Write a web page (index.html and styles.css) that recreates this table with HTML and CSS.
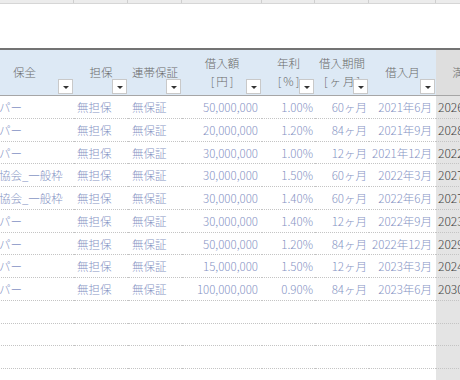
FILE: index.html
```html
<!DOCTYPE html>
<html lang="ja">
<head>
<meta charset="utf-8">
<link rel="stylesheet" href="styles.css">
</head>
<body>
<div class="sheet">
  <div class="grid strip">
    <div></div><div></div><div></div><div></div><div></div><div></div><div></div><div></div>
  </div>
  <div class="gap"></div>
  <div class="grid table">
    <div class="hd"><span>保全</span><i class="dd"></i></div>
    <div class="hd"><span>担保</span><i class="dd"></i></div>
    <div class="hd"><span>連帯保証</span><i class="dd"></i></div>
    <div class="hd"><span>借入額<br><b class="unit">[円]</b></span><i class="dd"></i></div>
    <div class="hd"><span>年利<br><b class="unit">[%]</b></span><i class="dd"></i></div>
    <div class="hd"><span>借入期間<br><b class="unit">[ヶ月]</b></span><i class="dd"></i></div>
    <div class="hd"><span>借入月</span><i class="dd"></i></div>
    <div class="hd hg"><span>満期月</span></div>

    <div class="c c1">プロパー</div><div class="c c2">無担保</div><div class="c c3">無保証</div><div class="c c4">50,000,000</div><div class="c c5">1.00%</div><div class="c c6">60ヶ月</div><div class="c c7">2021年6月</div><div class="c c8">2026年6月</div>
    <div class="c c1">プロパー</div><div class="c c2">無担保</div><div class="c c3">無保証</div><div class="c c4">20,000,000</div><div class="c c5">1.20%</div><div class="c c6">84ヶ月</div><div class="c c7">2021年9月</div><div class="c c8">2028年9月</div>
    <div class="c c1">プロパー</div><div class="c c2">無担保</div><div class="c c3">無保証</div><div class="c c4">30,000,000</div><div class="c c5">1.00%</div><div class="c c6">12ヶ月</div><div class="c c7">2021年12月</div><div class="c c8">2022年12月</div>
    <div class="c c1">保証協会_一般枠</div><div class="c c2">無担保</div><div class="c c3">無保証</div><div class="c c4">30,000,000</div><div class="c c5">1.50%</div><div class="c c6">60ヶ月</div><div class="c c7">2022年3月</div><div class="c c8">2027年3月</div>
    <div class="c c1">保証協会_一般枠</div><div class="c c2">無担保</div><div class="c c3">無保証</div><div class="c c4">30,000,000</div><div class="c c5">1.40%</div><div class="c c6">60ヶ月</div><div class="c c7">2022年6月</div><div class="c c8">2027年6月</div>
    <div class="c c1">プロパー</div><div class="c c2">無担保</div><div class="c c3">無保証</div><div class="c c4">30,000,000</div><div class="c c5">1.40%</div><div class="c c6">12ヶ月</div><div class="c c7">2022年9月</div><div class="c c8">2023年9月</div>
    <div class="c c1">プロパー</div><div class="c c2">無担保</div><div class="c c3">無保証</div><div class="c c4">50,000,000</div><div class="c c5">1.20%</div><div class="c c6">84ヶ月</div><div class="c c7">2022年12月</div><div class="c c8">2029年12月</div>
    <div class="c c1">プロパー</div><div class="c c2">無担保</div><div class="c c3">無保証</div><div class="c c4">15,000,000</div><div class="c c5">1.50%</div><div class="c c6">12ヶ月</div><div class="c c7">2023年3月</div><div class="c c8">2024年3月</div>
    <div class="c c1">プロパー</div><div class="c c2">無担保</div><div class="c c3">無保証</div><div class="c c4">100,000,000</div><div class="c c5">0.90%</div><div class="c c6">84ヶ月</div><div class="c c7">2023年6月</div><div class="c c8">2030年6月</div>

    <div class="c"></div><div class="c"></div><div class="c"></div><div class="c"></div><div class="c"></div><div class="c"></div><div class="c"></div><div class="c c8"></div>
    <div class="c"></div><div class="c"></div><div class="c"></div><div class="c"></div><div class="c"></div><div class="c"></div><div class="c"></div><div class="c c8"></div>
    <div class="c"></div><div class="c"></div><div class="c"></div><div class="c"></div><div class="c"></div><div class="c"></div><div class="c"></div><div class="c c8"></div>
    <div class="c"></div><div class="c"></div><div class="c"></div><div class="c"></div><div class="c"></div><div class="c"></div><div class="c"></div><div class="c c8"></div>
  </div>
</div>
</body>
</html>
```

FILE: styles.css
```css
html, body {
  margin: 0;
  padding: 0;
  background: #ffffff;
}
body {
  width: 460px;
  height: 380px;
  overflow: hidden;
  font-family: "Noto Sans CJK JP", "Noto Sans", sans-serif;
  font-weight: 300;
  font-size: 11.5px;
}
.sheet {
  margin-left: -25px;
}
.grid {
  display: grid;
  grid-template-columns: 99px 54px 54px 80px 53px 54px 67px 67px;
  width: 528px;
}
.strip {
  height: 4px;
  box-sizing: border-box;
  background: #ececec;
  border-bottom: 1px solid #d6d6d6;
}
.strip div {
  border-right: 1px solid #cfcfcf;
}
.gap {
  height: 44px;
}
.hd {
  position: relative;
  height: 48px;
  box-sizing: border-box;
  border-top: 2px solid #737373;
  border-bottom: 1px solid #a6a6a6;
  background: #dde9f5;
  color: #6a6a6a;
  display: flex;
  align-items: center;
  justify-content: center;
  text-align: center;
  line-height: 18px;
  padding-bottom: 1px;
}
.unit {
  font-weight: 300;
  letter-spacing: 2px;
  margin-right: -2px;
}
.hd.hg {
  background: #dedede;
}
.dd {
  position: absolute;
  right: 1px;
  bottom: 1px;
  width: 15px;
  height: 15px;
  box-sizing: border-box;
  background: #ffffff;
  border: 1px solid #c9c9c9;
  display: flex;
  align-items: center;
  justify-content: center;
}
.dd::after {
  content: "";
  width: 0;
  height: 0;
  margin-top: 1px;
  border-left: 3px solid transparent;
  border-right: 3px solid transparent;
  border-top: 3px solid #333333;
}
.c {
  height: 22.75px;
  box-sizing: border-box;
  border-bottom: 1px dotted #c4c4c4;
  color: #8593c4;
  white-space: nowrap;
  overflow: hidden;
  line-height: 22px;
}
.c1 { padding-left: 1px; }
.c2 { padding-left: 3px; }
.c3 { padding-left: 4px; }
.c4 { text-align: right; padding-right: 4px; }
.c5 { text-align: right; padding-right: 2px; }
.c6 { text-align: right; padding-right: 2px; }
.c7 { text-align: right; padding-right: 4px; }
.c8 {
  background: #e4e4e4;
  color: #404040;
  padding-left: 2px;
  font-size: 12px;
  font-weight: 300;
}
```
